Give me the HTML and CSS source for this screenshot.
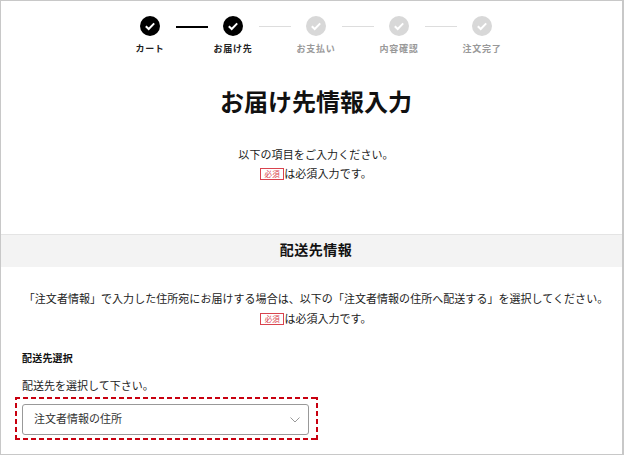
FILE: index.html
```html
<!DOCTYPE html>
<html lang="ja">
<head>
    <meta charset="UTF-8">
    <title>お届け先情報入力</title>
    <link rel="stylesheet" href="styles.css">
</head>
<body>
    <div class="frame">
        <ol class="steps">
            <li class="step done">
                <span class="step-icon"><svg viewBox="0 0 20 20" width="20" height="20"><path d="M5.8 10.2l2.9 2.8 5.5-5.6" fill="none" stroke="#fff" stroke-width="2"/></svg></span>
                <span class="step-label">カート</span>
            </li>
            <li class="step-line done"></li>
            <li class="step done">
                <span class="step-icon"><svg viewBox="0 0 20 20" width="20" height="20"><path d="M5.8 10.2l2.9 2.8 5.5-5.6" fill="none" stroke="#fff" stroke-width="2"/></svg></span>
                <span class="step-label">お届け先</span>
            </li>
            <li class="step-line"></li>
            <li class="step">
                <span class="step-icon"><svg viewBox="0 0 20 20" width="20" height="20"><path d="M5.8 10.2l2.9 2.8 5.5-5.6" fill="none" stroke="#fff" stroke-width="2"/></svg></span>
                <span class="step-label">お支払い</span>
            </li>
            <li class="step-line"></li>
            <li class="step">
                <span class="step-icon"><svg viewBox="0 0 20 20" width="20" height="20"><path d="M5.8 10.2l2.9 2.8 5.5-5.6" fill="none" stroke="#fff" stroke-width="2"/></svg></span>
                <span class="step-label">内容確認</span>
            </li>
            <li class="step-line"></li>
            <li class="step">
                <span class="step-icon"><svg viewBox="0 0 20 20" width="20" height="20"><path d="M5.8 10.2l2.9 2.8 5.5-5.6" fill="none" stroke="#fff" stroke-width="2"/></svg></span>
                <span class="step-label">注文完了</span>
            </li>
        </ol>

        <h1 class="page-title">お届け先情報入力</h1>

        <div class="lead">
            <p>以下の項目をご入力ください。</p>
            <p><span class="required">必須</span>は必須入力です。</p>
        </div>

        <h2 class="section-title">配送先情報</h2>

        <div class="notice">
            <p>「注文者情報」で入力した住所宛にお届けする場合は、以下の「注文者情報の住所へ配送する」を選択してください。</p>
            <p><span class="required">必須</span>は必須入力です。</p>
        </div>

        <div class="field">
            <div class="field-label">配送先選択</div>
            <div class="field-help">配送先を選択して下さい。</div>
            <div class="highlight">
                <div class="select">
                    <span class="select-text">注文者情報の住所</span>
                    <svg viewBox="0 0 10 6" width="10" height="6"><path d="M.5 .5l4.5 4.5 4.5-4.5" fill="none" stroke="#999" stroke-width="1"/></svg>
                </div>
            </div>
        </div>
    </div>
</body>
</html>
```

FILE: styles.css
```css
* {
    box-sizing: border-box;
}

body {
    margin: 0;
    background-color: #fff;
    color: #222;
    font-family: "Noto Sans CJK JP", "Noto Sans", sans-serif;
    font-size: 11px;
}

p {
    margin: 0;
}

.frame {
    height: 455px;
    overflow: hidden;
    border: 1px solid #c8c8c8;
    border-right-width: 2px;
}

.steps {
    display: flex;
    justify-content: center;
    margin: 0;
    padding: 15px 0 0 9px;
    list-style: none;
}

.step {
    display: flex;
    flex-direction: column;
    align-items: center;
    width: 40px;
    color: #999;
}

.step-icon {
    width: 20px;
    height: 20px;
    border-radius: 50%;
    background-color: #d8d8d8;
}

.step-icon svg {
    display: block;
}

.step-label {
    margin-top: 6px;
    font-size: 9px;
    font-weight: 700;
    letter-spacing: 0.7px;
    line-height: 14px;
    white-space: nowrap;
}

.step.done {
    color: #222;
}

.step.done .step-icon {
    background-color: #000;
}

.step-line {
    width: 32px;
    height: 1px;
    margin: 10px 5.5px 0;
    background-color: #ddd;
}

.step-line.done {
    height: 2px;
    background-color: #000;
}

.page-title {
    margin: 29px 0 0;
    padding-left: 9px;
    color: #111;
    font-size: 24px;
    font-weight: 700;
    line-height: 32px;
    text-align: center;
}

.lead {
    margin-top: 28px;
    padding-left: 9px;
    letter-spacing: 0.1px;
    line-height: 19px;
    text-align: center;
}

.required {
    display: inline-block;
    width: 24px;
    border: 1px solid #d9434e;
    color: #d9434e;
    font-size: 7.5px;
    line-height: 10px;
    text-align: center;
    vertical-align: 1px;
}

.section-title {
    height: 33px;
    margin: 51px 0 0;
    padding-left: 9px;
    border-top: 1px solid #e4e4e4;
    background-color: #f3f3f3;
    color: #111;
    font-size: 14px;
    font-weight: 700;
    letter-spacing: 0.5px;
    line-height: 29px;
    text-align: center;
}

.notice {
    margin-top: 21px;
    padding-left: 9px;
    letter-spacing: 0.04px;
    line-height: 20px;
    text-align: center;
}

.field {
    margin-top: 23px;
    padding-left: 21px;
}

.field-label {
    color: #111;
    font-size: 10px;
    font-weight: 700;
    letter-spacing: 0.2px;
    line-height: 14px;
}

.field-help {
    margin-top: 12px;
    line-height: 16px;
}

.highlight {
    width: 303px;
    margin: 4px 0 0 -7px;
    padding: 7px 7px 5px;
    background:
        repeating-linear-gradient(90deg, #c8000f 0 5px, transparent 5px 8px) top / 100% 2px no-repeat,
        repeating-linear-gradient(90deg, #c8000f 0 5px, transparent 5px 8px) bottom / 100% 2px no-repeat,
        repeating-linear-gradient(0deg, #c8000f 0 5px, transparent 5px 8px) left / 2px 100% no-repeat,
        repeating-linear-gradient(0deg, #c8000f 0 5px, transparent 5px 8px) right / 2px 100% no-repeat;
}

.select {
    display: flex;
    justify-content: space-between;
    align-items: center;
    width: 287px;
    height: 31px;
    padding: 0 8px 0 11px;
    border: 1px solid #999;
    border-radius: 3px;
    background-color: #fff;
    color: #333;
}

.select-text {
    padding-bottom: 3px;
}
```
